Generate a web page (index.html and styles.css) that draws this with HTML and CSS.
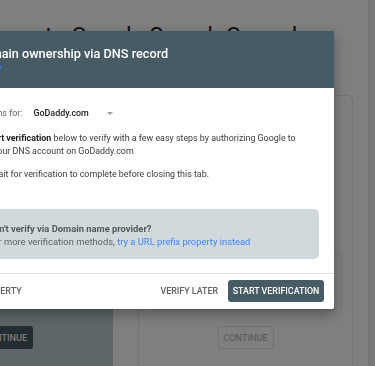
FILE: index.html
```html
<!DOCTYPE html>
<html lang="en">
<head>
<meta charset="utf-8">
<title>Verify domain ownership</title>
<link rel="stylesheet" href="styles.css">
</head>
<body>
<div class="page">
  <main class="main">
    <h1 class="hero">Welcome to Google Search Console</h1>
    <div class="cards">
      <section class="card card-domain">
        <button class="btn-dark">CONTINUE</button>
      </section>
      <section class="card card-url">
        <div class="field"></div>
        <button class="btn-outline">CONTINUE</button>
      </section>
    </div>
  </main>
  <div class="rail"></div>
</div>

<div class="scrim"></div>

<div class="dialog">
  <header class="dlg-head">
    <h2 class="dlg-title">Verify domain ownership via DNS record</h2>
    <div class="dlg-sub"><span class="dot"></span></div>
  </header>
  <div class="dlg-body">
    <div class="instr-row">
      <span class="instr-label">Instructions for:</span>
      <div class="select">
        <span class="select-value">GoDaddy.com</span>
        <span class="select-arrow"></span>
      </div>
    </div>
    <p class="para">Click <b>Start verification</b> below to verify with a few easy steps by authorizing Google to access your DNS account on GoDaddy.com</p>
    <p class="para para-2">Please wait for verification to complete before closing this tab.</p>
    <div class="info">
      <div class="info-title">Can't verify via Domain name provider?</div>
      <div class="info-text">For more verification methods, <a class="link" href="#">try a URL prefix property instead</a></div>
    </div>
  </div>
  <footer class="dlg-foot">
    <button class="btn-text btn-left">REMOVE PROPERTY</button>
    <button class="btn-text">VERIFY LATER</button>
    <button class="btn-primary">START VERIFICATION</button>
  </footer>
</div>
</body>
</html>
```
FILE: styles.css
```css
* { box-sizing: border-box; }
html, body {
  margin: 0;
  padding: 0;
  width: 375px;
  height: 366px;
  overflow: hidden;
  background: #ffffff;
  font-family: Roboto, "Liberation Sans", Arial, sans-serif;
}

/* ---------- background page ---------- */
.page {
  display: flex;
  width: 375px;
  height: 366px;
  overflow: hidden;
}
.main {
  width: 368px;
  height: 366px;
  flex: none;
  overflow: hidden;
}
.rail {
  flex: none;
  width: 7px;
  background: #f2f2f2;
  border-left: 1px solid #dedede;
}
.hero {
  margin: 23px 0 0 -56px;
  font-size: 23px;
  line-height: 28px;
  font-weight: 400;
  color: #202124;
  white-space: nowrap;
}
.cards {
  display: flex;
  align-items: flex-start;
  gap: 25px;
  margin-top: 44px;
  margin-left: -110px;
}
.card {
  flex: none;
  height: 290px;
  border-radius: 6px;
  display: flex;
  flex-direction: column;
  align-items: center;
}
.card-domain {
  width: 223px;
  background: #bccdd4;
  padding: 231px 80px 0 0;
  align-items: flex-end;
}
.card-url {
  width: 215px;
  border: 1px solid #e8e8e8;
  background: #ffffff;
  padding: 157px 10px 0 10px;
}
.field {
  width: 100%;
  height: 57px;
  border: 1px solid #e6e6e6;
  border-radius: 5px;
}
.btn-dark, .btn-outline {
  font-family: Roboto, "Liberation Sans", Arial, sans-serif;
  font-size: 9.2px;
  font-weight: 500;
  width: 56px;
  height: 23px;
  border-radius: 3px;
  padding: 0;
}
.btn-dark {
  background: #455a64;
  color: #f0f0f0;
  border: none;
}
.btn-outline {
  margin-top: 16px;
  background: #ffffff;
  color: #bdbdbd;
  border: 1px solid #e2e2e2;
}

/* ---------- overlay ---------- */
.scrim {
  position: fixed;
  inset: 0;
  background: rgba(0, 0, 0, 0.5);
}

/* ---------- dialog ---------- */
.dialog {
  position: fixed;
  top: 31px;
  left: -100px;
  width: 434px;
  background: #ffffff;
  box-shadow: 0 5px 14px rgba(0, 0, 0, 0.35);
  border-radius: 2px;
}
.dlg-head {
  height: 57px;
  background: #475b65;
  padding: 15px 0 0 40px;
}
.dlg-title {
  margin: 0;
  font-size: 12.7px;
  line-height: 16px;
  font-weight: 500;
  color: #ffffff;
  white-space: nowrap;
}
.dlg-sub {
  height: 4px;
  margin-top: 3px;
  padding-left: 57px;
}
.dot {
  display: block;
  width: 4px;
  height: 4px;
  border-radius: 50%;
  background: #1a8cff;
}
.dlg-body {
  padding: 15px 15px 14px 63px;
  font-size: 8.9px;
  line-height: 13px;
  color: #3c4043;
}
.instr-row {
  display: flex;
  align-items: center;
  height: 20px;
  gap: 11px;
  margin-left: -3px;
}
.instr-label {
  color: #5f6368;
}
.select {
  display: flex;
  align-items: center;
  width: 84px;
}
.select-value {
  color: #202124;
  font-weight: 500;
  flex: 1;
}
.select-arrow {
  width: 0;
  height: 0;
  border-left: 3px solid transparent;
  border-right: 3px solid transparent;
  border-top: 3px solid #9e9e9e;
  margin-right: 4px;
}
.para {
  margin: 8.5px 0 0 0;
}
.para b {
  font-weight: 700;
  color: #202124;
}
.para-2 {
  margin-top: 10px;
}
.info {
  margin: 28.5px 0 0 -40px;
  background: #d1d9dd;
  border-radius: 5px;
  padding: 12.5px 10px 11.5px 65px;
  font-size: 9.4px;
  color: #5f6368;
}
.info-title {
  font-weight: 700;
  color: #55595d;
}
.link {
  color: #4285f4;
  text-decoration: none;
}
.dlg-foot {
  display: flex;
  align-items: center;
  gap: 2px;
  border-top: 1px solid #e3e3e3;
  padding: 6px 10px 7px 0;
}
.btn-text, .btn-primary {
  font-family: Roboto, "Liberation Sans", Arial, sans-serif;
  font-size: 8.9px;
  font-weight: 500;
  height: 22px;
  border: none;
  border-radius: 3px;
  padding: 0 8px;
  background: transparent;
  white-space: nowrap;
}
.btn-text {
  color: #5f6368;
}
.btn-left {
  margin-right: auto;
  margin-left: 32px;
}
.btn-primary {
  width: 96px;
  padding: 0;
  background: #475b65;
  color: #ffffff;
}
```
